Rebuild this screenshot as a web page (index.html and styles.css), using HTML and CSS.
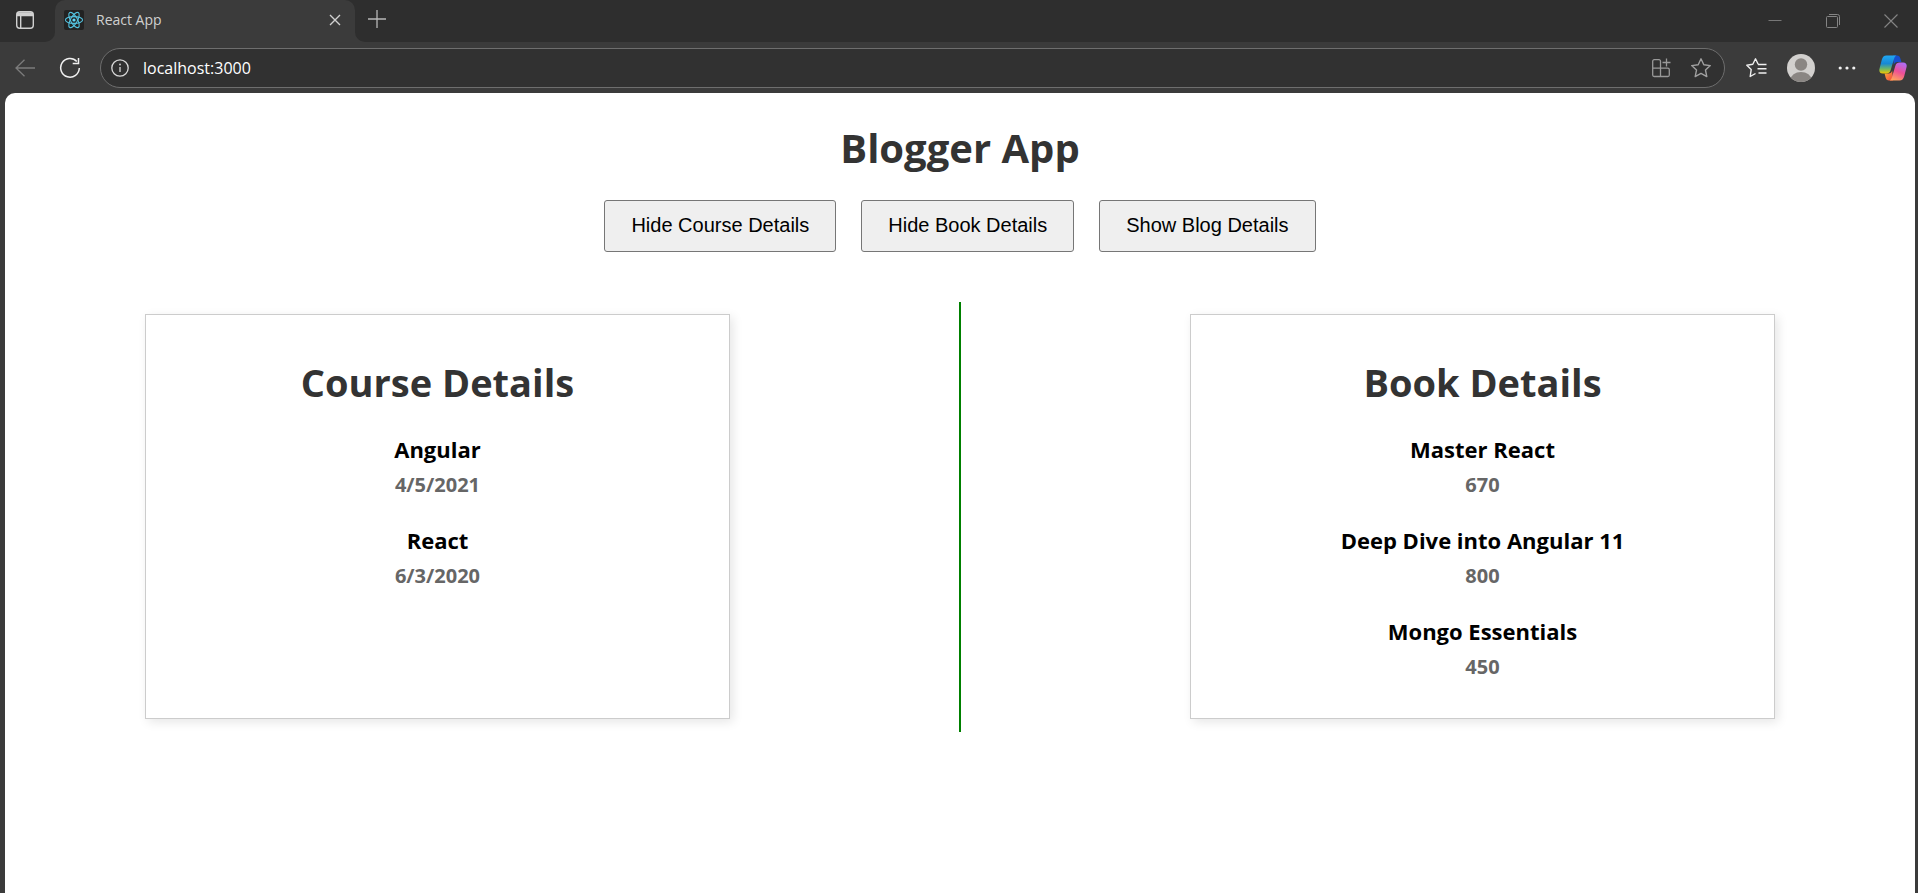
FILE: index.html
```html
<!DOCTYPE html>
<html lang="en">
<head>
<meta charset="utf-8">
<title>React App</title>
<link rel="stylesheet" href="styles.css">
</head>
<body>
<div class="browser">
  <header class="tab-strip">
    <button class="icon-button tab-actions" aria-label="Tab actions">
      <svg width="20" height="20" viewBox="0 0 20 20" fill="none" stroke="#d0d0d0" stroke-width="1.4"><rect x="1.7" y="1.7" width="16.6" height="16.6" rx="3"/><path d="M2 3.5h16M2 5h16" stroke-width="2.6"/><path d="M5.7 6v12"/></svg>
    </button>
    <div class="tab">
      <svg class="favicon" width="20" height="20" viewBox="0 0 20 20" fill="none" stroke="#53c1de" stroke-width="1.1"><rect width="20" height="20" rx="2" fill="#222" stroke="none"/><ellipse cx="10" cy="10" rx="8.6" ry="3.4"/><ellipse cx="10" cy="10" rx="8.6" ry="3.4" transform="rotate(60 10 10)"/><ellipse cx="10" cy="10" rx="8.6" ry="3.4" transform="rotate(120 10 10)"/><circle cx="10" cy="10" r="1.6" fill="#61dafb" stroke="none"/></svg>
      <span class="tab-title">React App</span>
      <button class="icon-button" aria-label="Close tab">
        <svg width="12" height="12" viewBox="0 0 12 12" stroke="#d0d0d0" stroke-width="1.4"><path d="M1 1l10 10M11 1L1 11"/></svg>
      </button>
    </div>
    <button class="icon-button new-tab" aria-label="New tab">
      <svg width="18" height="18" viewBox="0 0 18 18" stroke="#b8b8b8" stroke-width="1.3"><path d="M9 0v18M0 9h18"/></svg>
    </button>
    <div class="window-controls">
      <button class="icon-button" aria-label="Minimize"><svg width="14" height="14" viewBox="0 0 14 14" stroke="#777" stroke-width="1"><path d="M.5 6.5h13"/></svg></button>
      <button class="icon-button" aria-label="Restore"><svg width="14" height="14" viewBox="0 0 14 14" fill="none" stroke="#858585" stroke-width="1"><rect x=".5" y="2.5" width="11" height="11" rx="1"/><path d="M3 .5h8.5a2 2 0 0 1 2 2V11"/></svg></button>
      <button class="icon-button" aria-label="Close"><svg width="14" height="14" viewBox="0 0 14 14" stroke="#858585" stroke-width="1.1"><path d="M.5 .5l13 13M13.5 .5l-13 13"/></svg></button>
    </div>
  </header>

  <nav class="toolbar" aria-label="Browser toolbar">
    <button class="icon-button" aria-label="Back">
      <svg width="20" height="18" viewBox="0 0 20 18" fill="none" stroke="#7c7c7c" stroke-width="1.3"><path d="M20 9H1M9.5.8L1 9l8.5 8.2"/></svg>
    </button>
    <button class="icon-button" aria-label="Refresh">
      <svg width="22" height="22" viewBox="0 0 22 22" fill="none" stroke="#f0f0f0" stroke-width="1.5"><path d="M17.8 4.5A9.3 9.3 0 1 0 20.3 11"/><path d="M19.5 1v5.600h-5.800"/></svg>
    </button>
    <div class="address-bar">
      <svg width="18" height="18" viewBox="0 0 18 18" fill="none" stroke="#d8d8d8" stroke-width="1.3"><circle cx="9" cy="9" r="8.2"/><path d="M9 8v5"/><circle cx="9" cy="5.5" r=".9" fill="#d8d8d8" stroke="none"/></svg>
      <input class="address" type="text" aria-label="Address" value="localhost:3000">
      <button class="icon-button" aria-label="Install app">
        <svg width="20" height="20" viewBox="0 0 20 20" fill="none" stroke="#999" stroke-width="1.3"><path d="M9.500 18.500V3.200a1.500 1.500 0 0 0-1.500-1.500H3.200a1.500 1.500 0 0 0-1.500 1.500V17a1.500 1.500 0 0 0 1.500 1.500h13.600a1.500 1.500 0 0 0 1.500-1.500v-5.300a1.500 1.500 0 0 0-1.500-1.500H1.700M15.500 .5v8M11.500 4.500h8"/></svg>
      </button>
      <button class="icon-button" aria-label="Add to favorites">
        <svg width="22" height="22" viewBox="0 0 22 22" fill="none" stroke="#a0a0a0" stroke-width="1.4" stroke-linejoin="round"><path d="M11 1.800l2.800 6 6.500.8-4.800 4.500 1.300 6.500L11 16.400l-5.800 3.200 1.300-6.500L1.700 8.600l6.500-.8z"/></svg>
      </button>
    </div>
    <div class="toolbar-actions">
      <button class="icon-button" aria-label="Favorites">
        <svg width="22" height="22" viewBox="0 0 22 22" fill="none" stroke="#f0f0f0" stroke-width="1.4" stroke-linejoin="round"><path d="M13.200 7.300L10.500 1.800 7.800 7.300l-6 .9 4.400 4.300-1 7 5.300-3M13 7.500h8.500M12.500 11.700h9M13.500 16h8"/></svg>
      </button>
      <button class="icon-button" aria-label="Profile">
        <svg width="28" height="28" viewBox="0 0 28 28"><defs><clipPath id="avatar"><circle cx="14" cy="14" r="14"/></clipPath></defs><g clip-path="url(#avatar)"><rect width="28" height="28" fill="#d2d0ce"/><circle cx="14" cy="10.5" r="6.2" fill="#8a8683"/><ellipse cx="14" cy="26" rx="10.5" ry="8" fill="#8a8683"/></g></svg>
      </button>
      <button class="icon-button more" aria-label="Settings and more">
        <svg width="18" height="18" viewBox="0 0 18 18" fill="#f0f0f0"><circle cx="2.2" cy="9" r="1.6"/><circle cx="9" cy="9" r="1.6"/><circle cx="15.8" cy="9" r="1.6"/></svg>
      </button>
      <button class="icon-button" aria-label="Copilot">
        <svg width="28" height="26" viewBox="0 0 28 26">
          <defs>
            <linearGradient id="cool" x1="0" y1="0" x2="0" y2="1"><stop offset="0" stop-color="#20a8f4"/><stop offset=".45" stop-color="#1788d4"/><stop offset=".75" stop-color="#71b862"/><stop offset="1" stop-color="#f2c600"/></linearGradient>
            <linearGradient id="warm" x1=".7" y1="0" x2=".3" y2="1"><stop offset="0" stop-color="#b06cf5"/><stop offset=".5" stop-color="#ee4f96"/><stop offset="1" stop-color="#ffa45c"/></linearGradient>
            <linearGradient id="orange" x1="0" y1="0" x2="1" y2="1"><stop offset="0" stop-color="#ffb13b"/><stop offset="1" stop-color="#f0433f"/></linearGradient>
          </defs>
          <path d="M14 .5h4c2 0 2.800 1 3.400 3l1 3.500h-4c-2 0-3 1-3.600 3z" fill="#174fce"/>
          <path d="M14 25.500h-4c-2 0-2.800-1-3.400-3L5.600 18.500h4c2 0 3-1 3.600-3z" fill="url(#orange)"/>
          <path d="M7.500 .5h10c-1.300.6-2 1.800-2.500 3.500l-3.300 11c-.8 2.600-2.200 3.500-4.500 3.500H3.800C1 18.500-.2 16.500.5 13.700L2.800 4.800C3.500 2 5 .5 7.500.5z" fill="url(#cool)"/>
          <path d="M20.500 25.500h-10c1.300-.6 2-1.800 2.500-3.500l3.300-11c.8-2.600 2.200-3.500 4.500-3.500h3.400c2.800 0 4 2 3.300 4.800l-2.300 8.900c-.7 2.800-2.200 4.300-4.700 4.300z" fill="url(#warm)"/>
        </svg>
      </button>
    </div>
  </nav>

  <main class="page">
    <h1 class="heading page-title">Blogger App</h1>
    <div class="toggles">
      <button class="toggle">Hide Course Details</button>
      <button class="toggle">Hide Book Details</button>
      <button class="toggle">Show Blog Details</button>
    </div>
    <div class="details">
      <section class="card">
        <h1 class="heading">Course Details</h1>
        <h3 class="name">Angular</h3>
        <h4 class="value">4/5/2021</h4>
        <h3 class="name">React</h3>
        <h4 class="value">6/3/2020</h4>
      </section>
      <div class="divider"></div>
      <section class="card">
        <h1 class="heading">Book Details</h1>
        <h3 class="name">Master React</h3>
        <h4 class="value">670</h4>
        <h3 class="name">Deep Dive into Angular 11</h3>
        <h4 class="value">800</h4>
        <h3 class="name">Mongo Essentials</h3>
        <h4 class="value">450</h4>
      </section>
    </div>
  </main>
</div>
</body>
</html>
```

FILE: styles.css
```css
* {
  box-sizing: border-box;
}

body {
  margin: 0;
  background: #3b3b3b;
  font-family: "Segoe UI", "Open Sans", "Noto Sans", sans-serif;
}

svg {
  display: block;
}

.browser {
  display: flex;
  flex-direction: column;
  min-height: 100vh;
}

.icon-button {
  display: flex;
  padding: 0;
  border: 0;
  background: none;
}

/* dark above the tab's rounded top corners, light below its flared foot */
.tab-strip {
  display: flex;
  height: 42px;
  background: linear-gradient(#2e2e2e 20px, #3b3b3b 20px) 45px 0 / 320px 100% no-repeat, #2e2e2e;
}

.tab-actions {
  width: 55px;
  padding-left: 15px;
  padding-bottom: 2px;
  align-items: center;
  background: #2e2e2e;
  border-bottom-right-radius: 10px;
}

.tab {
  display: flex;
  align-items: center;
  width: 300px;
  padding: 0 14px 2px 9px;
  background: #3b3b3b;
  border-radius: 10px 10px 0 0;
}

.tab-title {
  flex: 1;
  padding: 0 0 2px 12px;
  color: #d0d0d0;
  font-size: 14px;
}

.new-tab {
  flex: 1;
  align-items: center;
  padding: 0 0 4px 13px;
  background: #2e2e2e;
  border-bottom-left-radius: 10px;
}

.window-controls {
  display: flex;
  align-items: center;
  gap: 44px;
  padding-right: 20px;
  background: #2e2e2e;
}

.toolbar {
  display: flex;
  align-items: center;
  height: 51px;
  padding: 0 11px 0 15px;
  gap: 24px;
}

.address-bar {
  display: flex;
  flex: 1;
  align-items: center;
  gap: 19px;
  height: 40px;
  margin-left: -5px;
  padding: 0 12px 0 10px;
  border: 1px solid #6e6e6e;
  border-radius: 20px;
  background: #313131;
}

.address {
  flex: 1;
  min-width: 0;
  margin-left: -5px;
  padding: 0;
  border: 0;
  outline: 0;
  background: none;
  color: #fff;
  font-family: inherit;
  font-size: 16px;
}

.toolbar-actions {
  display: flex;
  align-items: center;
  gap: 20px;
  margin-left: -4px;
}

.more {
  width: 24px;
  justify-content: center;
}

.page {
  flex: 1;
  margin: 0 3px 0 5px;
  padding: 28px 0;
  border-radius: 10px 10px 0 0;
  background: #fff;
  text-align: center;
}

.heading {
  margin: 0;
  color: #333;
  font-size: 38px;
  line-height: 54px;
  font-weight: 700;
}

.page-title {
  font-size: 40px;
}

.toggles {
  display: flex;
  justify-content: center;
  gap: 25px;
  margin-top: 25px;
}

.toggle {
  height: 52px;
  padding: 0 26px 2px;
  border: 1px solid #767676;
  border-radius: 3px;
  background: #efefef;
  color: #000;
  font-family: Arial, "Liberation Sans", sans-serif;
  font-size: 20px;
}

.details {
  display: flex;
  justify-content: space-between;
  margin-top: 50px;
  padding: 0 140px;
}

.divider {
  width: 2px;
  background: green;
}

.card {
  flex: 1;
  max-width: 585px;
  margin: 12px 0 13px;
  padding: 40px 25px 12px;
  border: 1px solid #ccc;
  box-shadow: 3px 3px 10px rgba(0, 0, 0, 0.1);
}

.name {
  margin: 24px 0 5px;
  color: #000;
  font-size: 22px;
  line-height: 32px;
}

.value {
  margin: 0 0 24px;
  color: #666;
  font-size: 20px;
  line-height: 30px;
}
```
